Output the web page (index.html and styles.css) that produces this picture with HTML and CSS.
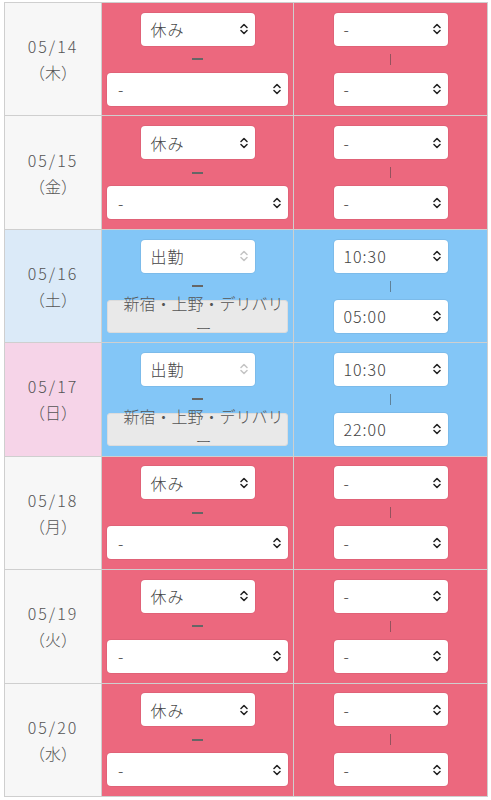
FILE: index.html
```html
<!DOCTYPE html>
<html lang="ja">
<head>
<meta charset="utf-8">
<title>シフト</title>
<link rel="stylesheet" href="styles.css">
</head>
<body>
<div class="wrap">
<table class="shift-table">
<colgroup><col class="c-date"><col class="c-shift"><col class="c-time"></colgroup>
<tbody>
<tr>
<td class="date">05/14<br><span class="wd">（木）</span></td>
<td class="shift off"><div class="stack">
<div class="sel sel-s"><span class="val">休み</span><svg class="arr" viewBox="0 0 8 12"><path d="M1 4.5 4 1.5 7 4.5M1 7.5 4 10.5 7 7.5"/></svg></div>
<span class="gap"><span class="dash"></span></span>
<div class="sel sel-w"><span class="val">-</span><svg class="arr" viewBox="0 0 8 12"><path d="M1 4.5 4 1.5 7 4.5M1 7.5 4 10.5 7 7.5"/></svg></div>
</div></td>
<td class="time off"><div class="stack">
<div class="sel sel-s"><span class="val">-</span><svg class="arr" viewBox="0 0 8 12"><path d="M1 4.5 4 1.5 7 4.5M1 7.5 4 10.5 7 7.5"/></svg></div>
<span class="gap"><span class="bar"></span></span>
<div class="sel sel-s"><span class="val">-</span><svg class="arr" viewBox="0 0 8 12"><path d="M1 4.5 4 1.5 7 4.5M1 7.5 4 10.5 7 7.5"/></svg></div>
</div></td>
</tr>
<tr>
<td class="date">05/15<br><span class="wd">（金）</span></td>
<td class="shift off"><div class="stack">
<div class="sel sel-s"><span class="val">休み</span><svg class="arr" viewBox="0 0 8 12"><path d="M1 4.5 4 1.5 7 4.5M1 7.5 4 10.5 7 7.5"/></svg></div>
<span class="gap"><span class="dash"></span></span>
<div class="sel sel-w"><span class="val">-</span><svg class="arr" viewBox="0 0 8 12"><path d="M1 4.5 4 1.5 7 4.5M1 7.5 4 10.5 7 7.5"/></svg></div>
</div></td>
<td class="time off"><div class="stack">
<div class="sel sel-s"><span class="val">-</span><svg class="arr" viewBox="0 0 8 12"><path d="M1 4.5 4 1.5 7 4.5M1 7.5 4 10.5 7 7.5"/></svg></div>
<span class="gap"><span class="bar"></span></span>
<div class="sel sel-s"><span class="val">-</span><svg class="arr" viewBox="0 0 8 12"><path d="M1 4.5 4 1.5 7 4.5M1 7.5 4 10.5 7 7.5"/></svg></div>
</div></td>
</tr>
<tr>
<td class="date sat">05/16<br><span class="wd">（土）</span></td>
<td class="shift on"><div class="stack">
<div class="sel sel-s"><span class="val">出勤</span><svg class="arr light" viewBox="0 0 8 12"><path d="M1 4.5 4 1.5 7 4.5M1 7.5 4 10.5 7 7.5"/></svg></div>
<span class="gap"><span class="dash"></span></span>
<div class="shop"><span class="shop-text">新宿・上野・デリバリー</span></div>
</div></td>
<td class="time on"><div class="stack">
<div class="sel sel-s"><span class="val">10:30</span><svg class="arr" viewBox="0 0 8 12"><path d="M1 4.5 4 1.5 7 4.5M1 7.5 4 10.5 7 7.5"/></svg></div>
<span class="gap"><span class="bar"></span></span>
<div class="sel sel-s"><span class="val">05:00</span><svg class="arr" viewBox="0 0 8 12"><path d="M1 4.5 4 1.5 7 4.5M1 7.5 4 10.5 7 7.5"/></svg></div>
</div></td>
</tr>
<tr>
<td class="date sun">05/17<br><span class="wd">（日）</span></td>
<td class="shift on"><div class="stack">
<div class="sel sel-s"><span class="val">出勤</span><svg class="arr light" viewBox="0 0 8 12"><path d="M1 4.5 4 1.5 7 4.5M1 7.5 4 10.5 7 7.5"/></svg></div>
<span class="gap"><span class="dash"></span></span>
<div class="shop"><span class="shop-text">新宿・上野・デリバリー</span></div>
</div></td>
<td class="time on"><div class="stack">
<div class="sel sel-s"><span class="val">10:30</span><svg class="arr" viewBox="0 0 8 12"><path d="M1 4.5 4 1.5 7 4.5M1 7.5 4 10.5 7 7.5"/></svg></div>
<span class="gap"><span class="bar"></span></span>
<div class="sel sel-s"><span class="val">22:00</span><svg class="arr" viewBox="0 0 8 12"><path d="M1 4.5 4 1.5 7 4.5M1 7.5 4 10.5 7 7.5"/></svg></div>
</div></td>
</tr>
<tr>
<td class="date">05/18<br><span class="wd">（月）</span></td>
<td class="shift off"><div class="stack">
<div class="sel sel-s"><span class="val">休み</span><svg class="arr" viewBox="0 0 8 12"><path d="M1 4.5 4 1.5 7 4.5M1 7.5 4 10.5 7 7.5"/></svg></div>
<span class="gap"><span class="dash"></span></span>
<div class="sel sel-w"><span class="val">-</span><svg class="arr" viewBox="0 0 8 12"><path d="M1 4.5 4 1.5 7 4.5M1 7.5 4 10.5 7 7.5"/></svg></div>
</div></td>
<td class="time off"><div class="stack">
<div class="sel sel-s"><span class="val">-</span><svg class="arr" viewBox="0 0 8 12"><path d="M1 4.5 4 1.5 7 4.5M1 7.5 4 10.5 7 7.5"/></svg></div>
<span class="gap"><span class="bar"></span></span>
<div class="sel sel-s"><span class="val">-</span><svg class="arr" viewBox="0 0 8 12"><path d="M1 4.5 4 1.5 7 4.5M1 7.5 4 10.5 7 7.5"/></svg></div>
</div></td>
</tr>
<tr>
<td class="date">05/19<br><span class="wd">（火）</span></td>
<td class="shift off"><div class="stack">
<div class="sel sel-s"><span class="val">休み</span><svg class="arr" viewBox="0 0 8 12"><path d="M1 4.5 4 1.5 7 4.5M1 7.5 4 10.5 7 7.5"/></svg></div>
<span class="gap"><span class="dash"></span></span>
<div class="sel sel-w"><span class="val">-</span><svg class="arr" viewBox="0 0 8 12"><path d="M1 4.5 4 1.5 7 4.5M1 7.5 4 10.5 7 7.5"/></svg></div>
</div></td>
<td class="time off"><div class="stack">
<div class="sel sel-s"><span class="val">-</span><svg class="arr" viewBox="0 0 8 12"><path d="M1 4.5 4 1.5 7 4.5M1 7.5 4 10.5 7 7.5"/></svg></div>
<span class="gap"><span class="bar"></span></span>
<div class="sel sel-s"><span class="val">-</span><svg class="arr" viewBox="0 0 8 12"><path d="M1 4.5 4 1.5 7 4.5M1 7.5 4 10.5 7 7.5"/></svg></div>
</div></td>
</tr>
<tr>
<td class="date">05/20<br><span class="wd">（水）</span></td>
<td class="shift off"><div class="stack">
<div class="sel sel-s"><span class="val">休み</span><svg class="arr" viewBox="0 0 8 12"><path d="M1 4.5 4 1.5 7 4.5M1 7.5 4 10.5 7 7.5"/></svg></div>
<span class="gap"><span class="dash"></span></span>
<div class="sel sel-w"><span class="val">-</span><svg class="arr" viewBox="0 0 8 12"><path d="M1 4.5 4 1.5 7 4.5M1 7.5 4 10.5 7 7.5"/></svg></div>
</div></td>
<td class="time off"><div class="stack">
<div class="sel sel-s"><span class="val">-</span><svg class="arr" viewBox="0 0 8 12"><path d="M1 4.5 4 1.5 7 4.5M1 7.5 4 10.5 7 7.5"/></svg></div>
<span class="gap"><span class="bar"></span></span>
<div class="sel sel-s"><span class="val">-</span><svg class="arr" viewBox="0 0 8 12"><path d="M1 4.5 4 1.5 7 4.5M1 7.5 4 10.5 7 7.5"/></svg></div>
</div></td>
</tr>
</tbody>
</table>
</div>
</body>
</html>
```
FILE: styles.css
```css
html, body {
  margin: 0;
  padding: 0;
  background: #ffffff;
}
body {
  font-family: "Noto Sans CJK JP", "Noto Sans", sans-serif;
  font-weight: 300;
  color: #444;
  font-size: 16px;
  text-spacing-trim: space-all;
}
.wrap {
  padding: 2px 0 0 4px;
}
.shift-table {
  border-collapse: collapse;
  table-layout: fixed;
  width: 483px;
}
.c-date { width: 97px; }
.c-shift { width: 192px; }
.c-time { width: 194px; }
.shift-table tr {
  height: 113.43px;
}
.shift-table td {
  border: 1px solid #cfcfcf;
  padding: 0;
  vertical-align: middle;
}
.date {
  background: #f7f7f7;
  text-align: center;
  color: #555;
  font-size: 16px;
  line-height: 26px;
  letter-spacing: 2px;
}
.date .wd {
  letter-spacing: 0;
}
.date.sat { background: #dbeaf8; }
.date.sun { background: #f6d4e8; }
.off { background: #ec687e; }
.on { background: #83c6f7; }
.stack {
  display: flex;
  flex-direction: column;
  align-items: center;
}
.sel {
  box-sizing: border-box;
  height: 33px;
  background: #ffffff;
  border-radius: 4px;
  box-shadow: 0 0 0 1px rgba(0, 0, 0, 0.05);
  display: flex;
  align-items: center;
  justify-content: space-between;
  padding: 0 7px 0 10px;
  color: #444;
  font-size: 16px;
  letter-spacing: 1px;
}
.sel-s { width: 114px; }
.sel-w { width: 181px; padding-left: 11px; }
.arr {
  width: 8px;
  height: 12px;
  fill: none;
  stroke: #222;
  stroke-width: 1.5;
  stroke-linecap: round;
  stroke-linejoin: round;
}
.arr.light { stroke: #c4c4c4; }
.gap {
  height: 27px;
  display: flex;
  align-items: center;
  justify-content: center;
}
.dash {
  width: 11px;
  height: 2px;
  background: #666;
}
.bar {
  width: 1px;
  height: 11px;
  background: rgba(60, 60, 60, 0.5);
}
.shop {
  box-sizing: border-box;
  width: 181px;
  height: 33px;
  background: #e9e9e9;
  border: 1px solid #dcdcdc;
  border-radius: 3px;
  display: flex;
  align-items: center;
  justify-content: center;
  padding: 0 3px 0 15px;
}
.shop-text {
  display: block;
  width: 100%;
  text-align: center;
  line-height: 25px;
  font-size: 16px;
  color: #555;
  line-break: anywhere;
}
```
